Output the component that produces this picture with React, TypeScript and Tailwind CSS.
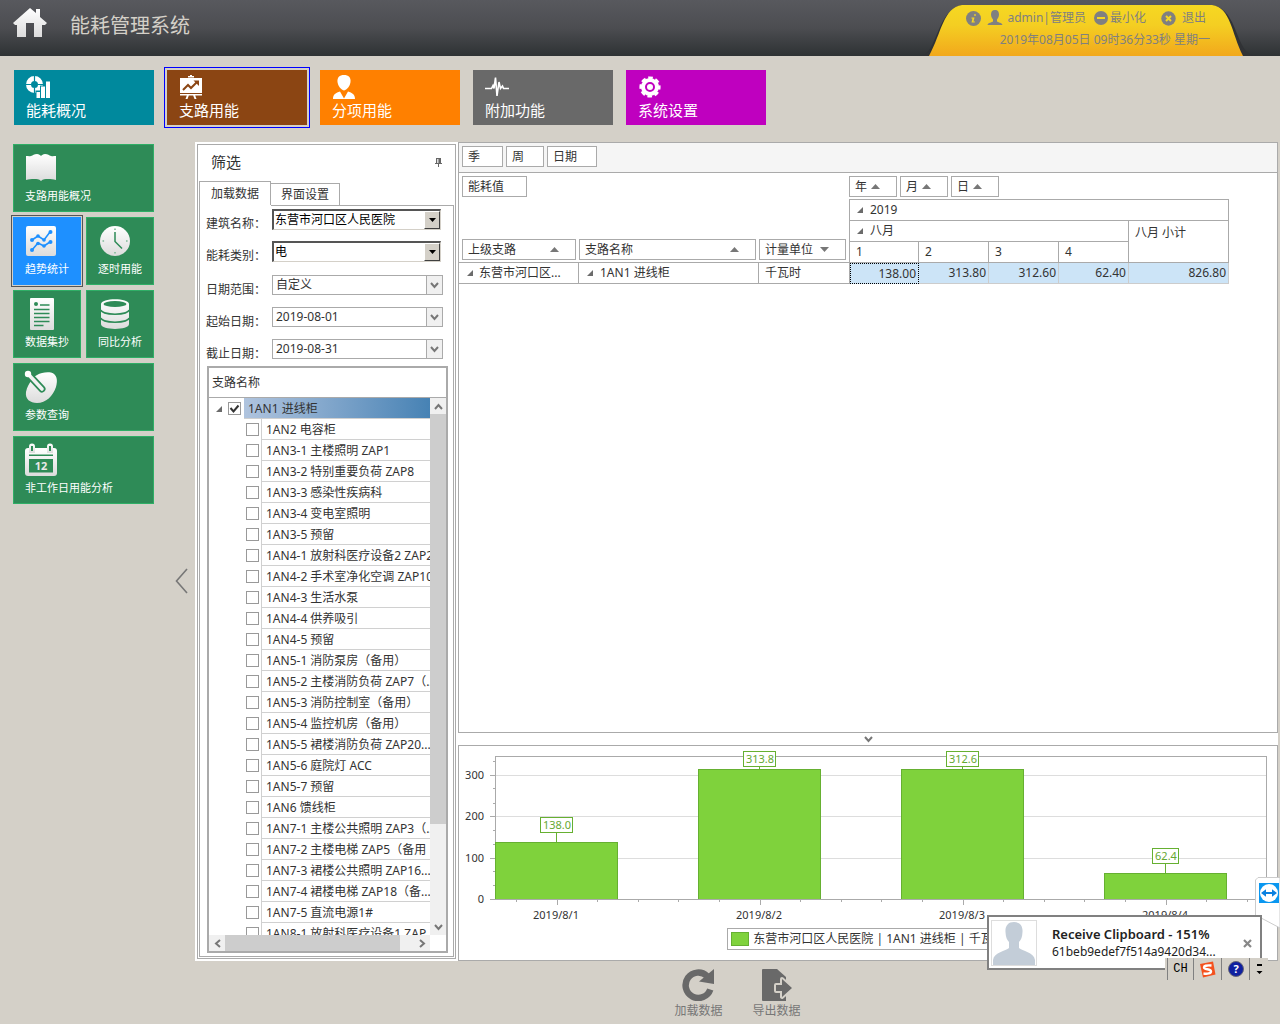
import React, { useState } from "react";
import clsx from "clsx";

const topTiles = [
  { name: "能耗概况", color: "bg-[#00899d]", icon: "overview" },
  { name: "支路用能", color: "bg-[#8b4513]", icon: "board" },
  { name: "分项用能", color: "bg-[#ff8000]", icon: "person" },
  { name: "附加功能", color: "bg-[#696969]", icon: "pulse" },
  { name: "系统设置", color: "bg-[#bf00bf]", icon: "gear" },
];

const sideTiles = [
  { name: "支路用能概况", icon: "book", wide: true },
  { name: "趋势统计", icon: "trend", wide: false },
  { name: "逐时用能", icon: "clock", wide: false },
  { name: "数据集抄", icon: "doc", wide: false },
  { name: "同比分析", icon: "db", wide: false },
  { name: "参数查询", icon: "dish", wide: true },
  { name: "非工作日用能分析", icon: "calendar", wide: true },
];

const branches = [
  "1AN2 电容柜",
  "1AN3-1 主楼照明 ZAP1",
  "1AN3-2 特别重要负荷 ZAP8",
  "1AN3-3 感染性疾病科",
  "1AN3-4 变电室照明",
  "1AN3-5 预留",
  "1AN4-1 放射科医疗设备2 ZAP2",
  "1AN4-2 手术室净化空调 ZAP10",
  "1AN4-3 生活水泵",
  "1AN4-4 供养吸引",
  "1AN4-5 预留",
  "1AN5-1 消防泵房（备用）",
  "1AN5-2 主楼消防负荷 ZAP7（...",
  "1AN5-3 消防控制室（备用）",
  "1AN5-4 监控机房（备用）",
  "1AN5-5 裙楼消防负荷 ZAP20...",
  "1AN5-6 庭院灯 ACC",
  "1AN5-7 预留",
  "1AN6 馈线柜",
  "1AN7-1 主楼公共照明 ZAP3（...",
  "1AN7-2 主楼电梯 ZAP5（备用",
  "1AN7-3 裙楼公共照明 ZAP16...",
  "1AN7-4 裙楼电梯 ZAP18（备...",
  "1AN7-5 直流电源1#",
  "1AN8-1 放射科医疗设备1 ZAP",
];

const days = [
  { date: "2019/8/1", value: 138.0 },
  { date: "2019/8/2", value: 313.8 },
  { date: "2019/8/3", value: 312.6 },
  { date: "2019/8/4", value: 62.4 },
];

const TopIcon = ({ name }: { name: string }) => (
  <svg width="24" height="24" viewBox="0 0 24 24" fill="#fff" className="block">
    {name === "overview" && (
      <>
        <circle cx="8.5" cy="9.5" r="6" fill="none" stroke="#fff" strokeWidth="5" />
        <path d="M8.5 1v5M0 9.500h5M12 9.500h5M8.500 13v5" stroke="#00899d" strokeWidth="1.200" />
        <path d="M9.500 15.500h4.500v-5h5V5.500H24v18.500H9.500z" fill="#00899d" />
        <path d="M10.500 17h3.500v6h-3.500zM15 11.500h4V23h-4zM20 6.500h4V23h-4z" />
      </>
    )}
    {name === "board" && (
      <>
        <path d="M9 1h2V0h2v1h2v1.500H9zM1 3h22v15H1zM1 19h22v1.500H1zM8 20h2l-1.500 4h-2zM14 20h2l1.500 4h-2z" />
        <path d="M4 15l5-5 3 3 6-6" fill="none" stroke="#8b4513" strokeWidth="2" />
        <path d="M14.500 5.500H20V11z" fill="#8b4513" />
      </>
    )}
    {name === "person" && (
      <>
        <path d="M12 0c4.500 0 7 2.500 6.500 7-.4 3.500-3 7.500-6.500 8.500C8.500 14.500 5.900 10.500 5.500 7 5 2.500 7.500 0 12 0z" />
        <path d="M8 16.500l4 7 4-7c4 1.500 7 2.500 7 7.500H1c0-5 3-6 7-7.500z" />
      </>
    )}
    {name === "pulse" && (
      <path d="M0 13.500h6.500l1.500-3 1 3 1.500-11L12 21l2-14 1.500 6.500 2-2.500 1 2.500H24" fill="none" stroke="#fff" strokeWidth="1.600" />
    )}
    {name === "gear" && (
      <>
        <circle cx="12" cy="12" r="7" fill="none" stroke="#fff" strokeWidth="4" />
        <circle cx="12" cy="12" r="9" fill="none" stroke="#fff" strokeWidth="3.200" strokeDasharray="4.400 2.670" strokeDashoffset="2" />
        <circle cx="12" cy="12" r="3" />
      </>
    )}
  </svg>
);

const SideIcon = ({ name, back }: { name: string; back: string }) => (
  <svg width="32" height="32" viewBox="0 0 32 32" fill="url(#silver)" className="block overflow-visible">
    {name === "book" && (
      <path d="M1 3c2 0 3 .5 5 0s3-2 6-2c2 0 3 1 4 2 1-1 2-2 4-2 3 0 4 1.500 6 2s3 0 5 0v24c-3-1-5-1-8-1-3 0-5 0-7 2-2-2-4-2-7-2-3 0-5 0-8 1z" />
    )}
    {name === "trend" && (
      <>
        <rect x="1" y="0" width="30" height="30" rx="2" />
        <g fill="none" stroke={back} strokeWidth="1.600">
          <path d="M7 14l6-4 6 4 6-8M7 24l6-7 6 3 6-4" />
        </g>
        <g fill={back}>
          <circle cx="7" cy="14" r="2" />
          <circle cx="13" cy="10" r="1.800" />
          <circle cx="19" cy="14" r="1.800" />
          <circle cx="25.500" cy="6" r="2" />
          <circle cx="7" cy="24" r="2" />
          <circle cx="13" cy="17.500" r="1.800" />
          <circle cx="19" cy="20" r="1.800" />
          <circle cx="25.500" cy="16" r="2" />
        </g>
      </>
    )}
    {name === "clock" && (
      <>
        <circle cx="17" cy="15" r="15" />
        <path d="M17 6v9.500l7 7" fill="none" stroke={back} strokeWidth="1.500" />
        <path d="M16.200 2.500h1.600v1.600h-1.600zM16.200 26h1.600v1.600h-1.600zM4.500 14.200h1.600v1.600H4.500zM28 14.200h1.600v1.600H28z" fill="#7fbb98" />
      </>
    )}
    {name === "doc" && (
      <>
        <rect x="5" y="-1" width="24" height="32" rx="1" />
        <path d="M15 6h9.500M9 10.500h15.500M9 14.500h15.500M9 18.500h15.500M9 22.500h15.500M9 26.500h9.500" stroke={back} strokeWidth="1.500" />
        <circle cx="11" cy="5" r="2" fill={back} />
      </>
    )}
    {name === "db" && (
      <>
        <path d="M3 5c0-6.500 28-6.500 28 0v20c0 6.500-28 6.500-28 0z" />
        <ellipse cx="17" cy="5" rx="11.500" ry="3" fill={back} />
        <path d="M3 11c1 5.500 27 5.500 28 0M3 19c1 5.500 27 5.500 28 0" fill="none" stroke={back} strokeWidth="1.500" />
      </>
    )}
    {name === "dish" && (
      <>
        <path d="M6 9C8 4 17-1 26 .500 32 2 33 8 31 15c-3 9-10 16-19 16C5 31 0 27 1 20c1-5 3-8 5-11z" />
        <path d="M4 3l13 14" stroke={back} strokeWidth="7" strokeLinecap="round" />
        <path d="M4 3l13 14" stroke="#f2f2f2" strokeWidth="3.600" strokeLinecap="round" />
        <circle cx="3" cy="2" r="3.200" fill="#fff" />
      </>
    )}
    {name === "calendar" && (
      <>
        <rect x="0" y="3" width="32" height="28" rx="3" />
        <path d="M4 8V1.500a3 3 0 0 1 6 0V8zM22 8V1.500a3 3 0 0 1 6 0V8z" />
        <path d="M6 1v5h2V1zM24 1v5h2V1zM4 9.500h24v1.500H4zM4 14h24v13.500H4z" fill={back} />
        <text x="16" y="25" textAnchor="middle" fontSize="11" fontWeight="700" fontFamily="Noto Sans, sans-serif" fill="#e8e8e8">
          12
        </text>
      </>
    )}
  </svg>
);

const Chevron = ({ className }: { className?: string }) => (
  <svg width="9" height="9" viewBox="0 0 9 9" className={clsx("block", className)}>
    <path d="M1 2l3.500 4L8 2" fill="none" stroke="#777" strokeWidth="2" />
  </svg>
);

const Expander = () => (
  <svg width="6" height="6" viewBox="0 0 6 6" className="block shrink-0">
    <path d="M6 0v6H0z" fill="#6b6b6b" />
  </svg>
);

const SortMark = ({ down }: { down?: boolean }) => (
  <svg width="9" height="5" viewBox="0 0 9 5" className="block shrink-0">
    <path d={down ? "M0 0h9L4.500 5z" : "M0 5h9L4.500 0z"} fill="#777" />
  </svg>
);

const Field = ({ text, width, sort, spread }: { text: string; width: string; sort?: string; spread?: boolean }) => (
  <button
    className={clsx(
      "flex h-[21px] items-center gap-1 border border-[#aaa] bg-white pl-[5px] text-left font-normal",
      spread ? "justify-between pr-4" : "pr-1",
      width
    )}
  >
    {text}
    {sort && <SortMark down={sort === "down"} />}
  </button>
);

const Header = () => (
  <header className="flex h-14 shrink-0 items-start bg-linear-to-b from-[#58595e] via-[#4c4d51] to-[#2e3234]">
    <svg width="36" height="32" viewBox="0 0 36 32" className="mt-2 ml-3 block" fill="url(#silver)">
      <path d="M18 0l6 5V1h4v8l7 6-2 2h-3v12h-8V15h-8v14H5V17H3l-2-2z" />
    </svg>
    <h1 className="mt-3 ml-[22px] text-xl leading-7 text-[#d4d0c8]">能耗管理系统</h1>

    <div className="relative mr-[14px] ml-auto h-14 w-[360px] text-xs text-[#808080]">
      <svg width="360" height="56" viewBox="0 0 360 56" className="absolute inset-0">
        <defs>
          <linearGradient id="tab" x1="0" y1="0" x2="0" y2="1">
            <stop offset="0" stopColor="#f6d822" />
            <stop offset="0.400" stopColor="#f4ce22" />
            <stop offset="1" stopColor="#f2a81c" />
          </linearGradient>
        </defs>
        <path d="M14 56C32 54 30 10 56 5H306C334 10 328 54 350 56z" fill="#303235" />
        <path d="M23 56C36 32 37 8 56 5H306C325 8 325 32 337 56z" fill="url(#tab)" />
      </svg>
      <div className="relative flex flex-col items-end">
        <div className="mt-[10px] mr-[60px] flex h-4 items-center leading-4">
          <svg width="15" height="15" viewBox="0 0 15 15" className="mr-[6px]">
            <circle cx="7.500" cy="7.500" r="7.500" fill="#808080" />
            <path d="M8.500 3l1.500.5-.5 1.500-1.500-.5zM5.500 6.500h3l-1 4h1.500l-.3 1H5.500l1-4H5.300z" fill="#f5d622" />
          </svg>
          <svg width="16" height="16" viewBox="0 0 16 16" className="mr-[5px]">
            <path d="M8 0c3 0 4 2 4 4.500S10.500 9 10 9.500v2c1 1 5 1 5.500 3.500H.500C1 12.500 5 12.500 6 11.500v-2C5.500 9 4 7 4 4.500S5 0 8 0z" fill="#808080" />
          </svg>
          <span className="mr-2">admin|管理员</span>
          <button className="mr-[15px] flex items-center gap-[2px]">
            <svg width="14" height="14" viewBox="0 0 14 14">
              <circle cx="7" cy="7" r="7" fill="#808080" />
              <path d="M3 6h8v2H3z" fill="#f5d622" />
            </svg>
            最小化
          </button>
          <button className="flex items-center gap-[6px]">
            <svg width="15" height="15" viewBox="0 0 15 15">
              <circle cx="7.500" cy="7.500" r="7.200" fill="#808080" />
              <path d="M5 5l5 5M10 5l-5 5" stroke="#f5d622" strokeWidth="2" />
            </svg>
            退出
          </button>
        </div>
        <p className="mt-[6px] mr-[56px] leading-4">2019年08月05日 09时36分33秒 星期一</p>
      </div>
    </div>
  </header>
);

const FilterPanel = () => {
  const [checked, setChecked] = useState<string[]>(["1AN1 进线柜"]);

  const toggle = (name: string) => {
    setChecked((prev) => (prev.includes(name) ? prev.filter((n) => n !== name) : [...prev, name]));
  };

  const box = (name: string, id: string) => (
    <span className="grid size-[13px] shrink-0 place-items-center border border-[#999] bg-white">
      <input
        id={id}
        type="checkbox"
        checked={checked.includes(name)}
        onChange={() => toggle(name)}
        className="col-start-1 row-start-1 size-[11px] appearance-none"
      />
      {checked.includes(name) && (
        <svg width="11" height="11" viewBox="0 0 11 11" className="pointer-events-none col-start-1 row-start-1">
          <path d="M1.500 5l3 3.500L9.500 2.500" fill="none" stroke="#333" strokeWidth="2" />
        </svg>
      )}
    </span>
  );

  return (
    <div className="mt-[2px] mb-[2px] ml-[2px] flex w-[259px] shrink-0 flex-col border border-[#aaa] p-px">
      <div className="flex h-[35px] shrink-0 items-center justify-between pr-3 pb-[3px] pl-3">
        <h2 className="text-[15px] leading-5">筛选</h2>
        <button aria-label="固定">
          <svg width="7" height="9" viewBox="0 0 7 9">
            <path d="M1 0h5v5h1v1H4v3H3V6H0V5h1z" fill="#666" />
            <path d="M2 1h1.500v4H2z" fill="#ddd" />
          </svg>
        </button>
      </div>

      <div className="flex shrink-0 items-end">
        <button className="h-6 w-[72px] border border-b-0 border-[#aaa] leading-6">加载数据</button>
        <button className="h-[22px] w-[69px] border-t border-r border-[#aaa] leading-[22px]">界面设置</button>
      </div>

      <div className="flex min-h-0 flex-1 flex-col border border-t-0 border-[#aaa] pb-[3px]">
        <div className="ml-[71px] shrink-0 border-t border-[#aaa]"></div>
        <div className="mt-[3px] shrink-0 pl-[6px]">
          <div className="flex h-8 items-start">
            <label htmlFor="building" className="w-[66px] pt-[5px] leading-5">建筑名称：</label>
            <div className="relative">
              <select
                id="building"
                className="block h-[21px] w-[169px] appearance-none border-t-2 border-r border-b border-l-2 border-t-[#555] border-r-[#d4d0c8] border-b-[#d4d0c8] border-l-[#555] bg-white pl-px text-black"
              >
                <option>东营市河口区人民医院</option>
              </select>
              <DropMark />
            </div>
          </div>
          <div className="flex h-8 items-start">
            <label htmlFor="kind" className="w-[66px] pt-[5px] leading-5">能耗类别：</label>
            <div className="relative">
              <select
                id="kind"
                className="block h-[21px] w-[169px] appearance-none border-t-2 border-r border-b border-l-2 border-t-[#555] border-r-[#d4d0c8] border-b-[#d4d0c8] border-l-[#555] bg-white pl-px text-black"
              >
                <option>电</option>
              </select>
              <DropMark />
            </div>
          </div>
        </div>
        <div className="mt-[2px] shrink-0 pl-[6px]">
          <div className="flex h-8 items-start">
            <label htmlFor="range" className="w-[66px] pt-[5px] leading-5">日期范围：</label>
            <div className="relative">
              <select id="range" className="block h-5 w-[171px] appearance-none border border-[#aaa] bg-white pl-[3px]">
                <option>自定义</option>
              </select>
              <span className="pointer-events-none absolute top-px right-px grid h-[18px] w-4 place-items-center border-l border-[#aaa] bg-[#f0f0f0]">
                <Chevron />
              </span>
            </div>
          </div>
          <DateRow id="from" label="起始日期：" value="2019-08-01" />
          <DateRow id="to" label="截止日期：" value="2019-08-31" />
        </div>

        <div className="mx-[7px] mt-[-5px] flex min-h-0 w-[241px] flex-1 flex-col border-2 border-[#aaa]">
          <div className="h-[30px] shrink-0 border-b border-[#aaa] pl-[3px] leading-[30px]">支路名称</div>
          <div className="flex min-h-0 flex-1">
            <ul className="min-w-0 flex-1 overflow-hidden">
              <li className="flex h-[21px] items-center">
                <span className="flex w-[35px] shrink-0 items-center gap-[6px] pl-[7px]">
                  <Expander />
                  {box("1AN1 进线柜", "b-root")}
                </span>
                <label
                  htmlFor="b-root"
                  className="h-[21px] flex-1 border-b border-[#d0d0d0] bg-linear-to-r from-[#b0c4de] to-[#4682b4] pl-1 leading-[21px] whitespace-nowrap"
                >
                  1AN1 进线柜
                </label>
              </li>
              {branches.map((name, i) => (
                <li key={name} className="flex h-[21px] items-center">
                  <span className="w-[52px] shrink-0 pl-[37px]">{box(name, `b-${i}`)}</span>
                  <label
                    htmlFor={`b-${i}`}
                    className="h-[21px] flex-1 overflow-hidden border-b border-l border-[#d0d0d0] pl-1 leading-[21px] whitespace-nowrap"
                  >
                    {name}
                  </label>
                </li>
              ))}
            </ul>
            <div className="flex w-4 shrink-0 flex-col bg-[#f0f0f0]">
              <span className="grid h-4 shrink-0 place-items-center"><Chevron className="rotate-180" /></span>
              <span className="h-[410px] shrink bg-[#cdcdcd]"></span>
              <span className="mt-auto grid h-4 shrink-0 place-items-center"><Chevron /></span>
            </div>
          </div>
          <div className="mr-4 flex h-4 shrink-0 bg-[#f0f0f0]">
            <span className="grid w-4 place-items-center"><Chevron className="rotate-90" /></span>
            <span className="w-[175px] bg-[#cdcdcd]"></span>
            <span className="ml-auto grid w-4 place-items-center"><Chevron className="-rotate-90" /></span>
          </div>
        </div>
      </div>
    </div>
  );
};

const DropMark = () => (
  <span className="pointer-events-none absolute top-[2px] right-px grid h-[18px] w-4 place-items-center border border-t-white border-r-[#404040] border-b-[#404040] border-l-white bg-[#d4d0c8]">
    <svg width="7" height="4" viewBox="0 0 7 4">
      <path d="M0 0h7L3.500 4z" fill="#000" />
    </svg>
  </span>
);

const DateRow = ({ id, label, value }: { id: string; label: string; value: string }) => (
  <div className="flex h-8 items-start">
    <label htmlFor={id} className="w-[66px] pt-[5px] leading-5">{label}</label>
    <div className="flex h-5 w-[171px] border border-[#aaa]">
      <input id={id} type="text" defaultValue={value} className="w-0 flex-1 pl-[3px]" />
      <button aria-label="选择日期" className="grid w-4 place-items-center border-l border-[#aaa] bg-[#f0f0f0]">
        <Chevron />
      </button>
    </div>
  </div>
);

const PivotGrid = () => (
  <div className="flex min-h-0 flex-1 flex-col border border-[#aaa] bg-white">
    <div className="flex h-[30px] shrink-0 gap-[3px] border-b border-[#aaa] bg-[#f5f5f5] pt-[3px] pl-[3px]">
      <Field text="季" width="w-[41px]" />
      <Field text="周" width="w-[38px]" />
      <Field text="日期" width="w-[50px]" />
    </div>
    <div className="flex h-[26px] shrink-0 gap-[3px] pt-[3px] pl-[3px]">
      <div className="w-[384px]">
        <Field text="能耗值" width="w-[65px]" />
      </div>
      <Field text="年" width="w-12" sort="up" />
      <Field text="月" width="w-12" sort="up" />
      <Field text="日" width="w-12" sort="up" />
    </div>
    <table className="w-[770px] table-fixed border-separate border-spacing-0 text-left [&_td]:h-[21px] [&_th]:font-normal">
      <colgroup>
        <col className="w-[120px]" />
        <col className="w-[180px]" />
        <col className="w-[91px]" />
        <col className="w-[69px]" />
        <col className="w-[70px]" />
        <col className="w-[70px]" />
        <col className="w-[70px]" />
        <col className="w-[100px]" />
      </colgroup>
      <thead>
        <tr className="h-[22px]">
          <th rowSpan={3} className="border-b border-[#aaa] pb-[2px] pl-[3px] align-bottom">
            <Field text="上级支路" width="w-[114px]" sort="up" spread />
          </th>
          <th rowSpan={3} className="border-b border-[#aaa] pb-[2px] align-bottom">
            <Field text="支路名称" width="w-[177px]" sort="up" spread />
          </th>
          <th rowSpan={3} className="border-r border-b border-[#aaa] pb-[2px] align-bottom">
            <Field text="计量单位" width="w-[87px]" sort="down" spread />
          </th>
          <th colSpan={5} className="border-t border-r border-b border-[#aaa] pl-[7px]">
            <span className="flex items-center gap-[7px] leading-5"><Expander />2019</span>
          </th>
        </tr>
        <tr className="h-[21px]">
          <th colSpan={4} className="border-r border-b border-[#aaa] pl-[7px]">
            <span className="flex items-center gap-[7px] leading-5"><Expander />八月</span>
          </th>
          <th rowSpan={2} className="border-r border-b border-[#aaa] pl-[6px] align-top leading-6">八月 小计</th>
        </tr>
        <tr className="h-[21px]">
          {["1", "2", "3", "4"].map((d) => (
            <th key={d} className="border-r border-b border-[#aaa] pl-[6px] leading-5">{d}</th>
          ))}
        </tr>
      </thead>
      <tbody>
        <tr>
          <td className="border-r border-b border-[#aaa] pl-2">
            <span className="flex items-center gap-[6px] leading-5"><Expander />东营市河口区...</span>
          </td>
          <td className="border-r border-b border-[#aaa] pl-2">
            <span className="flex items-center gap-[7px] leading-5"><Expander />1AN1 进线柜</span>
          </td>
          <td className="border-r border-b border-[#aaa] pl-[6px] leading-5">千瓦时</td>
          <td className="border border-dotted border-black bg-[#cce4f7] pr-[2px] text-right leading-[18px]">138.00</td>
          {days.slice(1).map((d) => (
            <td key={d.date} className="border-r border-b border-[#ccc] bg-[#cce4f7] pr-[2px] text-right leading-5">
              {d.value.toFixed(2)}
            </td>
          ))}
          <td className="border-r border-b border-[#ccc] bg-[#cce4f7] pr-[2px] text-right leading-5">826.80</td>
        </tr>
      </tbody>
    </table>
  </div>
);

const Chart = () => {
  const base = 153;
  const y = (v: number) => Math.round(base - v * 0.414);
  const x = (i: number) => 98 + i * 203;

  return (
    <div className="relative h-[216px] shrink-0 border border-[#aaa] bg-white">
      <svg className="block h-[180px] w-full" fontSize="11" fill="#333" shapeRendering="crispEdges">
        {[100, 200, 300].map((v) => (
          <path key={v} d={`M37 ${y(v) + 0.5}H808`} stroke="#ddd" />
        ))}
        <path d="M36.500 153V10.500H807.500V153" fill="none" stroke="#aaa" />
        {days.map((d, i) => {
          const top = d.value > 300 ? 23 : y(d.value);
          const labelY = d.value > 300 ? 5 : top - 25;
          const w = d.value < 100 ? 26 : 32;
          return (
            <g key={d.date}>
              <rect x={x(i) - 61.500} y={top + 0.500} width="122" height={base - top} fill="#7fd23c" stroke="#66b031" />
              <path d={`M${x(i) - 0.500} ${labelY + 16}V${top}`} stroke="#66b031" />
              <rect x={x(i) - w / 2 - 0.500} y={labelY + 0.500} width={w} height="15" fill="#fff" stroke="#66b031" />
              <text x={x(i)} y={labelY + 12} textAnchor="middle" fill="#66a832">{d.value.toFixed(1)}</text>
              <text x={x(i) - 1} y="173" textAnchor="middle">{d.date}</text>
            </g>
          );
        })}
        <path d="M31 153.500H808" stroke="#aaa" />
        {[0, 100, 200, 300].map((v) => (
          <g key={v}>
            <path d={`M31 ${y(v) + 0.5}h5`} stroke="#aaa" />
            <text x="25" y={y(v) + 4} textAnchor="end">{v}</text>
          </g>
        ))}
        {[33, 67, 133, 167, 233, 267, 333].map((v) => (
          <path key={v} d={`M34 ${y(v) + 0.5}h2`} stroke="#aaa" />
        ))}
        {Array.from({ length: 19 }, (_, n) => (
          <path key={n} d={`M${Math.round(57 + n * 40.6) + 0.5} 154v${n % 5 === 1 ? 5 : 2}`} stroke="#aaa" />
        ))}
      </svg>
      <div className="flex justify-center">
        <div className="mt-[2px] flex h-[22px] items-center gap-1 border border-[#aaa] px-[3px] whitespace-nowrap">
          <span className="h-[14px] w-[18px] border border-[#66b031] bg-[#7fd23c]"></span>
          东营市河口区人民医院 | 1AN1 进线柜 | 千瓦时
        </div>
      </div>
    </div>
  );
};

// floating remote session windows, bottom right
const Overlays = () => (
  <>
    <svg width="25" height="52" viewBox="0 0 25 52" className="absolute right-0 bottom-[95px]">
      <path d="M25 .500H3L.500 3v35L25 51z" fill="#fff" stroke="#ccc" />
      <path d="M4 6h20v20H4z" fill="#0a97f0" />
      <circle cx="14" cy="16" r="9" fill="#fff" />
      <path d="M6 16l5-3.800v2.800h6v-2.800l5 3.800-5 3.800V17h-6v2.800z" fill="#0a80e0" />
    </svg>
    <div className="absolute right-[18px] bottom-[54px] flex h-[55px] w-[275px] items-center border-2 border-[#808080] bg-white pl-[2px] text-[#222]">
      <svg width="46" height="46" viewBox="0 0 44 44" className="shrink-0 border border-[#ddd]">
        <path d="M22 1c6 0 9 4 8.500 10-.2 5-1.500 8-3.500 10v6c3 3 15 4 16 12v5H1v-5c1-8 13-9 16-12v-6c-2-2-3.300-5-3.500-10C13 5 16 1 22 1z" fill="#c3cdd8" />
      </svg>
      <div className="ml-[15px] flex-1 whitespace-nowrap">
        <p className="text-[13px] leading-[18px] font-semibold">Receive Clipboard - 151%</p>
        <p className="text-xs leading-[18px]">61beb9edef7f514a9420d34...</p>
      </div>
      <button aria-label="关闭" className="mt-px mr-[8px]">
        <svg width="9" height="9" viewBox="0 0 9 9">
          <path d="M1 1l7 7M8 1L1 8" stroke="#888" strokeWidth="2.200" />
        </svg>
      </button>
    </div>
    <div className="absolute right-[12px] bottom-[44px] flex h-[22px] w-[103px] items-center bg-[#d4d0c8] pl-[2px]">
      <span className="flex h-full w-[27px] items-center justify-center border-r border-l border-[#808080] font-['Liberation_Mono',monospace] text-black">CH</span>
      <span className="flex h-full w-7 items-center justify-center border-r border-[#808080]">
        <svg width="17" height="17" viewBox="0 0 17 17">
          <path d="M1 3l13-2.500 2.500 13L4 16.500z" fill="#f4511e" />
          <path d="M12.500 4.500C7 4 5 5 5 6.500 5 9 12 7.500 12 10.500c0 2-3.500 2.500-7.500 2" fill="none" stroke="#fff" strokeWidth="2.400" />
        </svg>
      </span>
      <span className="flex h-full w-7 items-center justify-center border-r border-[#808080]">
        <svg width="16" height="16" viewBox="0 0 16 16">
          <circle cx="8" cy="8" r="7.500" fill="#1020a0" stroke="#667" />
          <text x="8" y="12" textAnchor="middle" fontSize="11" fontWeight="700" fill="#fff">?</text>
        </svg>
      </span>
      <svg width="18" height="14" viewBox="0 0 18 14">
        <path d="M7 2h5v2H7zM6.500 9h6l-3 3z" fill="#000" />
      </svg>
    </div>
  </>
);

const App = () => {
  const [top, setTop] = useState("支路用能");
  const [side, setSide] = useState("趋势统计");

  return (
    <div className="relative flex h-screen flex-col overflow-hidden bg-[#d4d0c8] font-['Noto_Sans','Noto_Sans_CJK_SC',sans-serif] text-xs text-[#333]">
      <svg width="0" height="0" className="absolute">
        <linearGradient id="silver" x1="0" y1="0" x2="0" y2="1">
          <stop offset="0" stopColor="#fff" />
          <stop offset="1" stopColor="#dcdcdc" />
        </linearGradient>
      </svg>

      <Header />

      <nav className="flex h-[86px] shrink-0 gap-[13px] px-[14px] pt-[14px]">
        {topTiles.map((t) => (
          <button
            key={t.name}
            onClick={() => setTop(t.name)}
            className={clsx(
              "flex h-[55px] w-[140px] flex-col pt-[5px] pl-3 text-left text-white",
              t.color,
              top === t.name && "outline-1 outline-offset-2 outline-[#0000ff]"
            )}
          >
            <TopIcon name={t.icon} />
            <span className="mt-px text-[15px] leading-5">{t.name}</span>
          </button>
        ))}
      </nav>

      <div className="flex min-h-0 flex-1">
        <aside className="w-[168px] shrink-0 pt-[2px] pl-[13px]">
          <div className="grid w-[141px] grid-cols-2 gap-[5px]">
            {sideTiles.map((t) => {
              const active = side === t.name;
              return (
                <button
                  key={t.name}
                  onClick={() => setSide(t.name)}
                  className={clsx(
                    "flex h-[68px] flex-col border pt-2 pl-[11px] text-left text-white",
                    t.wide && "col-span-2",
                    active
                      ? "border-[#1e90ff] bg-[#1e90ff] outline-1 outline-offset-1 outline-[#555]"
                      : "border-[#2fae66] bg-[#2e8b57]"
                  )}
                >
                  <SideIcon name={t.icon} back={active ? "#1e90ff" : "#2e8b57"} />
                  <span className="mt-1 text-[11px] leading-[14px]">{t.name}</span>
                </button>
              );
            })}
          </div>
        </aside>
        <button aria-label="收起" className="flex w-[27px] shrink-0 items-center justify-center pb-1">
          <svg width="13" height="26" viewBox="0 0 13 26">
            <path d="M12 1L1.500 13 12 25" fill="none" stroke="#777" strokeWidth="1.600" />
          </svg>
        </button>

        <div className="flex min-w-0 flex-1 flex-col">
          <main className="mr-[2px] flex min-h-0 flex-1 bg-white">
            <FilterPanel />
            <div className="ml-[2px] flex min-w-0 flex-1 flex-col">
              <PivotGrid />
              <button aria-label="折叠图表" className="grid h-3 shrink-0 place-items-center">
                <Chevron />
              </button>
              <Chart />
            </div>
          </main>
          <footer className="flex h-[63px] shrink-0 justify-center gap-[30px] pt-2 text-[#777]">
            <button className="flex flex-col items-center">
              <svg width="32" height="32" viewBox="0 0 32 32">
                <path d="M28.300 20.500A12.700 12.700 0 1 1 25 7" fill="none" stroke="#696969" strokeWidth="6.500" />
                <path d="M32 0v15l-15-2.500z" fill="#696969" />
              </svg>
              <span className="mt-px leading-[18px]">加载数据</span>
            </button>
            <button className="flex flex-col items-center">
              <svg width="32" height="32" viewBox="0 0 32 32">
                <path d="M1 1a1 1 0 0 1 1-1h14l9 8v24H2a1 1 0 0 1-1-1z" fill="#696969" />
                <path d="M15 16h6v-6l10 9-10 9v-6h-6z" fill="#696969" stroke="#d4d0c8" strokeWidth="4" strokeLinejoin="round" />
                <path d="M15 16h6v-6l10 9-10 9v-6h-6z" fill="#696969" />
              </svg>
              <span className="mt-px leading-[18px]">导出数据</span>
            </button>
          </footer>
        </div>
      </div>

      <Overlays />
    </div>
  );
};

export default App;
